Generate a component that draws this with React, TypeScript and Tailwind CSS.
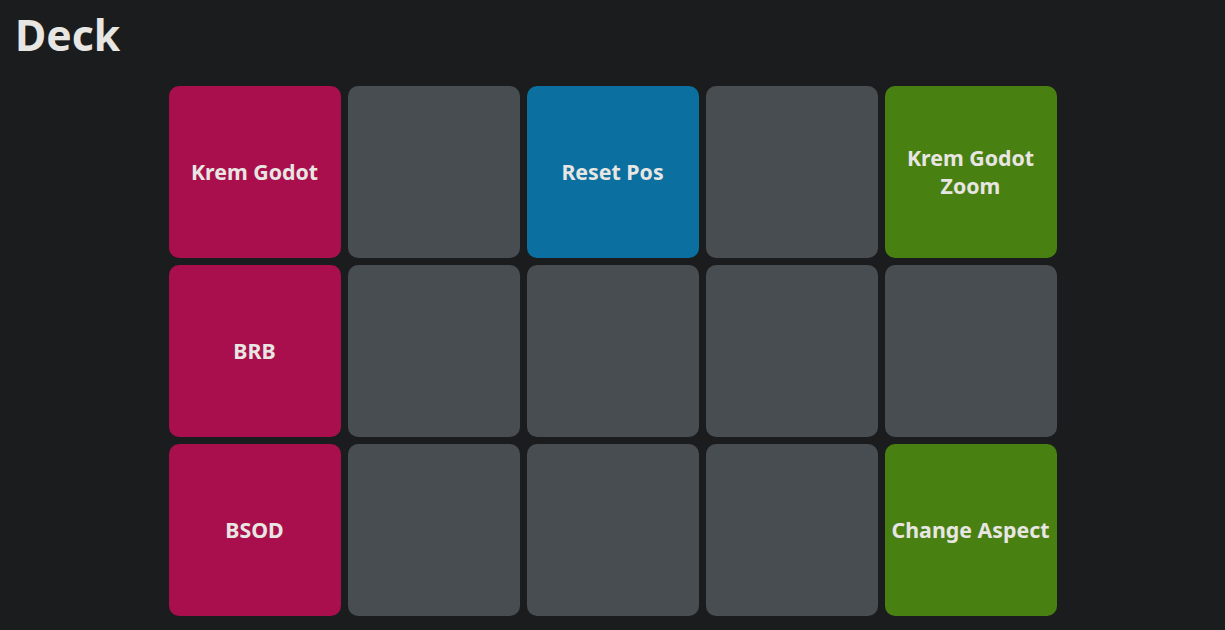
import React from 'react';

interface Tile {
  label?: string;
  color: string;
}

const RED = 'bg-[#a80f4c]';
const BLUE = 'bg-[#0b6f9f]';
const GREEN = 'bg-[#498012]';
const GRAY = 'bg-[#484d52]';

const tiles: Tile[] = [
  { label: 'Krem Godot', color: RED },
  { color: GRAY },
  { label: 'Reset Pos', color: BLUE },
  { color: GRAY },
  { label: 'Krem Godot Zoom', color: GREEN },
  { label: 'BRB', color: RED },
  { color: GRAY },
  { color: GRAY },
  { color: GRAY },
  { color: GRAY },
  { label: 'BSOD', color: RED },
  { color: GRAY },
  { color: GRAY },
  { color: GRAY },
  { label: 'Change Aspect', color: GREEN },
];

const App: React.FC = () => {
  return (
    <div
      className="min-h-screen bg-[#1b1c1e] text-[#e8e6e3]"
      style={{ fontFamily: '"Noto Sans", "Open Sans", sans-serif' }}
    >
      <h1 className="pl-[15px] pt-[9px] text-[42.67px] font-bold leading-[52px]">Deck</h1>

      {/* Button grid */}
      <div className="mt-[25px] grid grid-cols-[repeat(5,172px)] auto-rows-[172px] justify-center gap-[7px]">
        {tiles.map((tile, i) => (
          <button
            key={i}
            className={`flex items-center justify-center rounded-[10px] px-1 text-center text-[21.33px] font-bold leading-[28px] ${tile.color}`}
          >
            {tile.label}
          </button>
        ))}
      </div>
    </div>
  );
};

export default App;
